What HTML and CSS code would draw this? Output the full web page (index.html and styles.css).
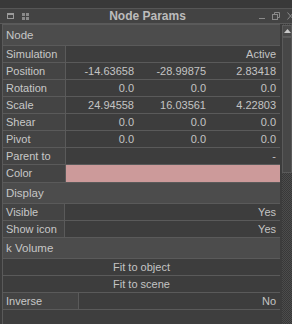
FILE: index.html
```html
<!DOCTYPE html>
<html lang="en">
<head>
    <meta charset="UTF-8">
    <title>Node Params</title>
    <link rel="stylesheet" href="styles.css">
</head>
<body>
    <div class="top-strip"></div>
    <div class="titlebar">
        <div class="title-icons">
            <svg width="7" height="6" viewBox="0 0 7 6"><rect x="0.5" y="0.5" width="6" height="5" fill="none" stroke="#9a9a9a"/><rect x="0" y="0" width="7" height="2" fill="#9a9a9a"/></svg>
            <svg width="7" height="7" viewBox="0 0 7 7" fill="#8a8a8a"><rect x="0" y="0" width="3" height="3"/><rect x="4" y="0" width="3" height="3"/><rect x="0" y="4" width="3" height="3"/><rect x="4" y="4" width="3" height="3"/></svg>
        </div>
        <div class="title">Node Params</div>
        <div class="title-icons right">
            <svg width="6" height="8" viewBox="0 0 6 8"><rect x="0" y="6" width="6" height="1" fill="#8a8a8a"/></svg>
            <svg width="8" height="8" viewBox="0 0 8 8" fill="none" stroke="#8a8a8a"><rect x="0.5" y="2.5" width="5" height="5"/><path d="M2.5 2.5V0.5h5v5h-2"/></svg>
            <svg width="6" height="8" viewBox="0 0 6 8" stroke="#8a8a8a"><path d="M0.5 0.5l6 7M6.5 0.5l-6 7"/></svg>
        </div>
    </div>
    <div class="panel">
        <div class="sheet">
            <div class="section-head">Node</div>
            <div class="row">
                <div class="label">Simulation</div>
                <div class="value">Active</div>
            </div>
            <div class="row">
                <div class="label">Position</div>
                <div class="value triple"><span>-14.63658</span><span>-28.99875</span><span>2.83418</span></div>
            </div>
            <div class="row">
                <div class="label">Rotation</div>
                <div class="value triple"><span>0.0</span><span>0.0</span><span>0.0</span></div>
            </div>
            <div class="row">
                <div class="label">Scale</div>
                <div class="value triple"><span>24.94558</span><span>16.03561</span><span>4.22803</span></div>
            </div>
            <div class="row">
                <div class="label">Shear</div>
                <div class="value triple"><span>0.0</span><span>0.0</span><span>0.0</span></div>
            </div>
            <div class="row">
                <div class="label">Pivot</div>
                <div class="value triple"><span>0.0</span><span>0.0</span><span>0.0</span></div>
            </div>
            <div class="row">
                <div class="label">Parent to</div>
                <div class="value">-</div>
            </div>
            <div class="row color-row">
                <div class="label">Color</div>
                <div class="value swatch"></div>
            </div>
            <div class="section-head">Display</div>
            <div class="row">
                <div class="label narrow">Visible</div>
                <div class="value">Yes</div>
            </div>
            <div class="row">
                <div class="label narrow">Show icon</div>
                <div class="value">Yes</div>
            </div>
            <div class="section-head">k Volume</div>
            <div class="row">
                <div class="button">Fit to object</div>
            </div>
            <div class="row">
                <div class="button">Fit to scene</div>
            </div>
            <div class="row">
                <div class="label wide">Inverse</div>
                <div class="value">No</div>
            </div>
            <div class="filler"></div>
        </div>
        <div class="scrollbar">
            <div class="sb-button"><svg width="7" height="4" viewBox="0 0 7 4"><path d="M0 4L3.5 0L7 4Z" fill="#c8c8c8"/></svg></div>
            <div class="sb-thumb"></div>
            <div class="sb-track"></div>
        </div>
    </div>
</body>
</html>
```

FILE: styles.css
```css
body {
    margin: 0;
    padding: 0;
    width: 292px;
    height: 324px;
    overflow: hidden;
    background-color: #3c3c3c;
    font-family: "Liberation Sans", Arial, sans-serif;
    font-size: 11px;
    color: #c4c4c4;
}
.top-strip {
    height: 8px;
    background-color: #393939;
    border-bottom: 1px solid #565656;
}
.titlebar {
    height: 14px;
    display: flex;
    align-items: center;
    background-color: #434343;
    border-bottom: 1px solid #5a5a5a;
    position: relative;
}
.title-icons {
    display: flex;
    align-items: center;
    gap: 8px;
    padding-left: 7px;
    width: 80px;
}
.title-icons.right {
    justify-content: flex-end;
    gap: 7px;
    padding-left: 0;
    padding-right: 0;
    margin-right: -1px;
}
.title {
    flex: 1;
    text-align: center;
    font-weight: bold;
    font-size: 12px;
    color: #bcbcbc;
    padding-right: 5px;
}
.panel {
    display: flex;
    height: 300px;
    padding-left: 2px;
}
.sheet {
    width: 278px;
    display: flex;
    flex-direction: column;
    gap: 1px;
    padding: 1px 0 0 1px;
    background-color: #5a5a5a;
}
.section-head {
    height: 20px;
    line-height: 20px;
    padding-left: 3px;
    background-color: #4c4c4c;
    font-size: 11.5px;
    color: #c6c6c6;
}
.row {
    display: flex;
    gap: 1px;
    height: 16px;
    line-height: 16px;
}
.color-row {
    height: 17px;
}
.label {
    width: 59px;
    padding-left: 3px;
    background-color: #444444;
    color: #c8c8c8;
    white-space: nowrap;
}
.label.narrow {
    width: 58px;
}
.label.wide {
    width: 72px;
}
.value {
    flex: 1;
    padding-right: 4px;
    text-align: right;
    background-color: #3d3d3d;
}
.value.triple {
    display: grid;
    grid-template-columns: 72px 72px 1fr;
    padding-right: 0;
}
.value.triple span {
    padding-right: 4px;
}
.value.swatch {
    background-color: #cc9a9a;
}
.button {
    flex: 1;
    text-align: center;
    background-color: #3d3d3d;
}
.filler {
    flex: 1;
    background-color: #3e3e3e;
    margin-right: 0;
}
.scrollbar {
    width: 10px;
    margin-left: 2px;
    display: flex;
    flex-direction: column;
    background: repeating-conic-gradient(#4c4c4c 0 25%, #383838 0 50%) 0 0 / 2px 2px;
}
.sb-button {
    height: 12px;
    margin-top: 1px;
    display: flex;
    align-items: center;
    justify-content: center;
    background-color: #4a4a4a;
    border: 1px solid #5c5c5c;
    box-sizing: border-box;
}
.sb-thumb {
    height: 136px;
    background-color: #474747;
    border: 1px solid #5a5a5a;
    box-sizing: border-box;
}
.sb-track {
    flex: 1;
}
```
